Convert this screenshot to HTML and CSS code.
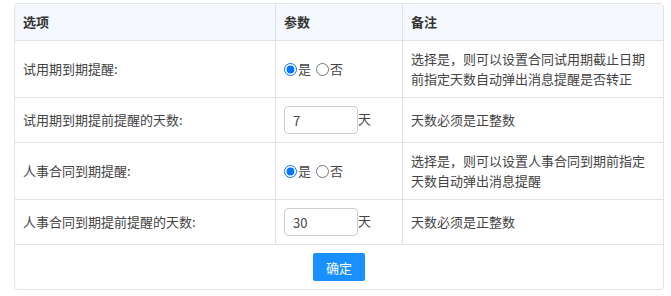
FILE: index.html
```html
<!DOCTYPE html>
<html lang="zh-CN">
<head>
    <meta charset="UTF-8">
    <title>提醒设置</title>
    <link rel="stylesheet" href="styles.css">
</head>
<body>
    <div id="wrap">
        <table class="set-table">
            <thead>
                <tr>
                    <th class="col-name">选项</th>
                    <th class="col-val">参数</th>
                    <th class="col-note">备注</th>
                </tr>
            </thead>
            <tbody>
                <tr>
                    <td>试用期到期提醒:</td>
                    <td>
                        <label><input type="radio" name="trial" checked />是</label>
                        <label><input type="radio" name="trial" />否</label>
                    </td>
                    <td>选择是，则可以设置合同试用期截止日期前指定天数自动弹出消息提醒是否转正</td>
                </tr>
                <tr>
                    <td>试用期到期提前提醒的天数:</td>
                    <td><input type="text" class="days" value="7" />天</td>
                    <td>天数必须是正整数</td>
                </tr>
                <tr>
                    <td>人事合同到期提醒:</td>
                    <td>
                        <label><input type="radio" name="contract" checked />是</label>
                        <label><input type="radio" name="contract" />否</label>
                    </td>
                    <td>选择是，则可以设置人事合同到期前指定天数自动弹出消息提醒</td>
                </tr>
                <tr>
                    <td>人事合同到期提前提醒的天数:</td>
                    <td><input type="text" class="days" value="30" />天</td>
                    <td>天数必须是正整数</td>
                </tr>
            </tbody>
        </table>
        <div class="foot">
            <button type="button" class="btn">确定</button>
        </div>
    </div>
</body>
</html>
```

FILE: styles.css
```css
*{margin: 0;padding: 0;box-sizing: border-box;}
body{font-size: 13px;font-family: "Noto Sans CJK SC", "Noto Sans", sans-serif;color: #444;background: #fff;}
#wrap{width: 650px; margin: 3px 0 0 14px; border: 1px solid #e2e2e2; border-radius: 4px; overflow: hidden;}
.set-table{width: 100%; border-collapse: separate; border-spacing: 0; table-layout: fixed;}
.set-table th, .set-table td{padding: 8px; line-height: 20px; text-align: left; vertical-align: middle; border-right: 1px solid #e2e2e2; border-bottom: 1px solid #e2e2e2; font-weight: normal;}
.set-table th:last-child, .set-table td:last-child{border-right: none;}
.set-table th{background: #f5f9ff; color: #333; font-weight: bold;}
.col-name{width: 261px;}
.col-val{width: 127px;}
.set-table label{margin-right: 2px;}
.set-table input[type=radio]{width: 13px; height: 13px; margin: 0 1px 0 0; vertical-align: -2px;}
.days{width: 74px; height: 28px; border: 1px solid #ccc; border-radius: 4px; padding: 0 8px; font-size: 13px; font-family: inherit; color: #444; outline: none; vertical-align: middle;}
.foot{padding: 8px 0; text-align: center; line-height: 0;}
.btn{width: 52px; height: 28px; background: #1890ff; color: #fff; border: none; border-radius: 2px; font-size: 13px; font-family: inherit;}
```
